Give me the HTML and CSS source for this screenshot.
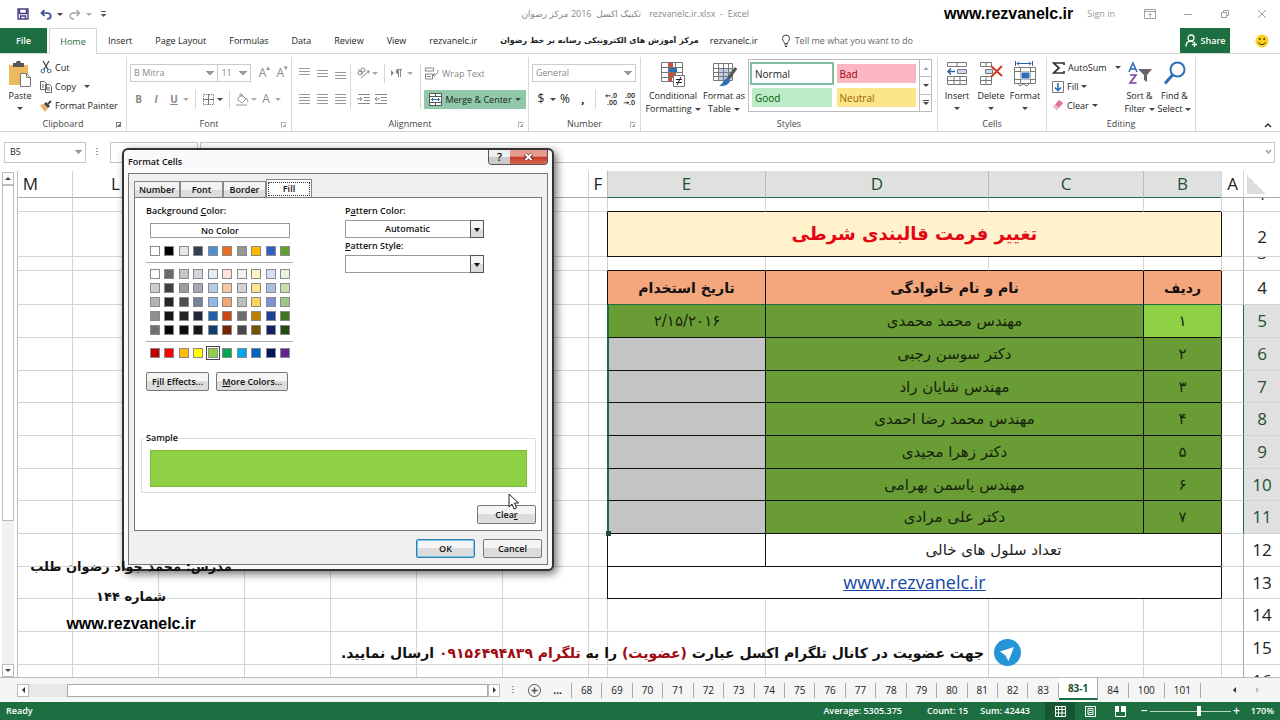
FILE: index.html
```html
<!DOCTYPE html>
<html lang="en">
<head>
    <meta charset="UTF-8">
    <meta name="viewport" content="width=device-width, initial-scale=1.0">
    <title>rezvanelc.ir.xlsx - Excel</title>
    <link rel="stylesheet" href="styles.css">
</head>
<body>
<div class="app">

    <header class="titlebar">
        <div class="quick">
            <button class="icon-btn" aria-label="Save"><svg width="12" height="12" viewBox="0 0 12 12" fill="none" stroke="#4b3f8c" stroke-width="1.4"><path d="M1 1h10v10H1zM2.5 1v4.500h7V1M3.500 11V8h5v3"/></svg></button>
            <button class="icon-btn" aria-label="Undo"><svg width="12" height="11" viewBox="0 0 12 11" fill="none" stroke="#2b4a8b" stroke-width="1.700"><path d="M4.500 1L1.500 4l3 3M1.500 4H7c5 0 5 6 0 6"/></svg></button>
            <i class="caret"></i>
            <button class="icon-btn redo" aria-label="Redo"><svg width="12" height="11" viewBox="0 0 12 11" fill="none" stroke="#a5a5a5" stroke-width="1.500"><path d="M7.500 1l3 3-3 3M10.500 4H5C0 4 0 10 5 10"/></svg></button>
            <i class="caret dim"></i>
            <button class="icon-btn more" aria-label="Customize toolbar"><svg width="7" height="7" viewBox="0 0 7 7"><path d="M1 .5h5" stroke="#555"/><path d="M.5 3h6L3.500 6z" fill="#555"/></svg></button>
        </div>
        <div class="doc-title"><span lang="fa" dir="rtl">تکنیک اکسل &nbsp;2016 مرکز رضوان</span><span>rezvanelc.ir.xlsx &nbsp;- &nbsp;Excel</span></div>
        <strong class="site">www.rezvanelc.ir</strong>
        <a class="signin" href="#">Sign in</a>
        <div class="window-btns">
            <button class="icon-btn" aria-label="Ribbon options"><svg width="12" height="10" viewBox="0 0 12 10" fill="none" stroke="#a0a0a0"><path d="M.5.5h11v9H.5zM.5 2.500h11M6 8.500v-4M4.500 6L6 4.500 7.500 6"/></svg></button>
            <button class="icon-btn" aria-label="Minimize"><svg width="10" height="10" viewBox="0 0 10 10" stroke="#a0a0a0"><path d="M1 5.500h8"/></svg></button>
            <button class="icon-btn" aria-label="Restore"><svg width="10" height="10" viewBox="0 0 10 10" fill="none" stroke="#a0a0a0"><path d="M1.500 3.500h5v5h-5zM3.500 3.500v-2h5v5h-2"/></svg></button>
            <button class="icon-btn" aria-label="Close"><svg width="10" height="10" viewBox="0 0 10 10" stroke="#a0a0a0"><path d="M1 1l8 8M9 1L1 9"/></svg></button>
        </div>
    </header>

    <nav class="tabs">
        <button class="tab file">File</button>
        <button class="tab active">Home</button>
        <button class="tab">Insert</button>
        <button class="tab">Page Layout</button>
        <button class="tab">Formulas</button>
        <button class="tab">Data</button>
        <button class="tab">Review</button>
        <button class="tab">View</button>
        <button class="tab">rezvanelc.ir</button>
        <button class="tab fa" lang="fa" dir="rtl">مرکز آموزش های الکترونیکی رسانه بر خط رضوان</button>
        <button class="tab">rezvanelc.ir</button>
        <button class="tab tell"><svg width="10" height="13" viewBox="0 0 10 13" fill="none" stroke="#444"><path d="M3.500 9.500C3.500 7.500 1.500 7 1.500 4.500a3.500 3.500 0 0 1 7 0C8.500 7 6.500 7.500 6.500 9.500zM3.500 11h3M4 12.500h2"/></svg>Tell me what you want to do</button>
        <button class="share"><svg width="13" height="13" viewBox="0 0 13 13" fill="none" stroke="#fff" stroke-width="1.300"><circle cx="6" cy="4" r="3"/><path d="M1 12.500c0-3 2-5 4-5.300 2 0 3 .5 3.500 1M9.500 8v5M7 10.500h5"/></svg>Share</button>
        <svg class="smiley" width="14" height="14" viewBox="0 0 14 14"><circle cx="7" cy="7" r="6.500" fill="#fbd021"/><circle cx="4.800" cy="5" r="1" fill="#423100"/><circle cx="9.200" cy="5" r="1" fill="#423100"/><path d="M3.500 8.300c1.500 3 5.500 3 7 0" fill="none" stroke="#423100"/></svg>
    </nav>

    <section class="ribbon">
        <div class="group g-clipboard">
            <div class="group-body">
                <button class="big"><svg width="26" height="28" viewBox="0 0 26 28"><path d="M2 5h19v20H2z" fill="#edb95e"/><path d="M6 3h3c0-3 5-3 5 0h3v4H6z" fill="#555"/><path d="M13.500 13.500h6l4 4v9h-10z" fill="#fff" stroke="#777"/><path d="M19.500 13.500v4h4" fill="none" stroke="#777"/></svg><span>Paste</span><i class="caret"></i></button>
                <div class="stack">
                    <button class="small"><svg width="12" height="13" viewBox="0 0 12 13" fill="none" stroke="#444"><path d="M3 0l5 8.500M9 0L4 8.500" stroke-width="1.300"/><circle cx="2.800" cy="10" r="1.800" stroke="#2f6ea8"/><circle cx="9.200" cy="10" r="1.800" stroke="#2f6ea8"/></svg>Cut</button>
                    <button class="small"><svg width="12" height="12" viewBox="0 0 12 12" fill="#fff" stroke="#666"><path d="M.5.5h4l2 2v6h-6zM5.500 3.500h4l2 2v6h-6zM7 7h3M7 9h3M2 4h2M2 6h2"/></svg>Copy<i class="caret wide"></i></button>
                    <button class="small"><svg width="12" height="12" viewBox="0 0 12 12"><path d="M0 5l4-1 4 4-3 4z" fill="#e9b065"/><path d="M4 4l2-2 4 4-2 2z" fill="#444"/><path d="M8 4l3-3" stroke="#444" stroke-width="2"/></svg>Format Painter</button>
                </div>
            </div>
            <div class="group-label">Clipboard<i class="launch"></i></div>
        </div>

        <div class="group g-font dim">
            <div class="group-body column">
                <div class="line">
                    <select class="combo font-name" aria-label="Font"><option>B Mitra</option></select><select class="combo font-size" aria-label="Font size"><option>11</option></select>
                    <button class="cmd w18 letter">A<sup>▴</sup></button>
                    <button class="cmd w18 letter">A<sup>▾</sup></button>
                </div>
                <div class="line">
                    <button class="cmd"><b>B</b></button>
                    <button class="cmd w18"><b><em>I</em></b></button>
                    <button class="cmd w18"><b><u>U</u></b></button>
                    <i class="caret dim"></i><i class="bar"></i>
                    <button class="cmd w18" aria-label="Borders"><svg width="11" height="11" viewBox="0 0 11 11" fill="none" stroke="#777"><path d="M.5.5h10v10H.5z" stroke-dasharray="1.500 1"/><path d="M5.500 0v11M0 5.500h11"/></svg></button>
                    <i class="caret"></i><i class="bar"></i>
                    <button class="cmd w18" aria-label="Fill color"><svg width="14" height="13" viewBox="0 0 14 13" fill="none" stroke="#999"><path d="M3 5l4-3 4 4-4 4-4-3zM5 4V1h2v3M11 5c2 1 2 3 1.500 4"/><path d="M1 12h11" stroke="#ccc" stroke-width="2"/></svg></button>
                    <i class="caret dim"></i>
                    <button class="cmd w18 letter" aria-label="Font color">A</button>
                    <i class="caret dim"></i>
                </div>
            </div>
            <div class="group-label">Font<i class="launch"></i></div>
        </div>

        <div class="group g-align dim">
            <div class="group-body align-body">
                <div class="align-grid">
                    <button class="cmd" aria-label="Top align"><i class="lines l2 top"></i></button>
                    <button class="cmd" aria-label="Middle align"><i class="lines l2"></i></button>
                    <button class="cmd" aria-label="Bottom align"><i class="lines l2 bottom"></i></button>
                    <button class="cmd" aria-label="Align left"><i class="lines"></i></button>
                    <button class="cmd" aria-label="Center"><i class="lines"></i></button>
                    <button class="cmd" aria-label="Align right"><i class="lines"></i></button>
                </div>
                <div class="align-mid">
                    <div class="line">
                        <button class="cmd" aria-label="Orientation"><svg width="14" height="12" viewBox="0 0 14 12" fill="none" stroke="#888"><circle cx="3" cy="6" r="2"/><circle cx="6" cy="3" r="2"/><path d="M1 2l5 5M4 11l8-7M9.500 4H12v2.500"/></svg></button>
                        <i class="caret dim"></i><i class="bar"></i>
                        <button class="cmd" aria-label="Text direction"><svg width="11" height="9" viewBox="0 0 11 9" fill="#888"><path d="M0 1l3 3-3 3zM7 0h4v1h-1v7H9V1H8v7H7V5C4 5 4 0 7 0z"/></svg></button>
                        <i class="caret dim"></i>
                    </div>
                    <div class="line">
                        <button class="cmd" aria-label="Decrease indent"><svg width="14" height="11" viewBox="0 0 14 11" fill="none" stroke="#888"><path d="M1 .5h12M7 3.500h6M7 6.500h6M1 9.500h12M0 5h5M3 3l2 2-2 2"/></svg></button>
                        <button class="cmd" aria-label="Increase indent"><svg width="14" height="11" viewBox="0 0 14 11" fill="none" stroke="#888"><path d="M1 .5h12M7 3.500h6M7 6.500h6M1 9.500h12M1 5h5M3 3L1 5l2 2"/></svg></button>
                    </div>
                </div>
                <div class="align-right">
                    <button class="small wrap"><svg width="14" height="13" viewBox="0 0 14 13" fill="none" stroke="#888"><path d="M.5 1h8v3h-8zM.5 7h7v5h-7zM2 9.500h4M13 3c0 4-2 5-5 5M10 6L8 8l2 2"/></svg>Wrap Text</button>
                    <button class="small merge"><svg width="13" height="13" viewBox="0 0 13 13" fill="#fff" stroke="#555"><path d="M.5.5h12v12H.5zM.5 3.500h12M.5 9.500h12M6.500.5v3M6.500 9.500v3"/><path d="M2.500 6.500h8M4 5L2.500 6.500 4 8M9 5l1.500 1.500L9 8" fill="none" stroke="#2b6cb0"/></svg>Merge &amp; Center<i class="caret"></i></button>
                </div>
            </div>
            <div class="group-label">Alignment<i class="launch"></i></div>
        </div>

        <div class="group g-number">
            <div class="group-body column">
                <div class="line"><select class="combo number-format" aria-label="Number format"><option>General</option></select></div>
                <div class="line">
                    <button class="cmd w18 sign">$</button><i class="caret"></i>
                    <button class="cmd w18 sign">%</button>
                    <button class="cmd w18 sign"><b>,</b></button><i class="bar"></i>
                    <button class="cmd w18 dec" aria-label="Increase decimal"><span>←.0</span><span>.00</span></button>
                    <button class="cmd w18 dec" aria-label="Decrease decimal"><span>.00</span><span>→.0</span></button>
                </div>
            </div>
            <div class="group-label">Number<i class="launch"></i></div>
        </div>

        <div class="group g-styles">
            <div class="group-body">
                <button class="big w56"><svg width="26" height="28" viewBox="0 0 26 28" fill="none" stroke="#777"><path d="M1.500 2.500h21v19h-21zM1.500 7.500h21M1.500 12.500h21M1.500 17.500h21M8.500 2v19M15.500 2v19"/><path d="M9 3h4v4H9zM9 13h6v4H9zM9 18h3v3H9z" fill="#d8492c" stroke="none"/><path d="M9 8h8v4H9z" fill="#2d6fb7" stroke="none"/><path d="M13.500 15.500h11v11h-11z" fill="#fff"/><path d="M16 19.500h6M16 22.500h6M21 17l-4 8" stroke="#222"/></svg><span>Conditional</span><span>Formatting<i class="caret"></i></span></button>
                <button class="big w44"><svg width="26" height="28" viewBox="0 0 26 28" fill="none" stroke="#777"><path d="M8 8h13v13H8z" fill="#bcd3ea" stroke="none"/><path d="M2.500 3.500h19v17h-19zM2.500 8.500h19M2.500 12.500h19M2.500 16.500h19M7.500 3v17M12.500 3v17M17.500 3v17"/><path d="M25 8l-8 11" stroke="#555" stroke-width="3"/><path d="M16 18l3 3c-2 5-7 5-11 5 4-2 4-6 8-8z" fill="#2d6fb7" stroke="none"/></svg><span>Format as</span><span>Table<i class="caret"></i></span></button>
                <div class="gallery">
                    <div class="gallery-items">
                        <button class="style normal">Normal</button>
                        <button class="style bad">Bad</button>
                        <button class="style good">Good</button>
                        <button class="style neutral">Neutral</button>
                    </div>
                    <div class="gallery-scroll">
                        <button aria-label="Up"><i class="caret up dim"></i></button>
                        <button aria-label="Down"><i class="caret"></i></button>
                        <button class="all" aria-label="More"><i class="caret"></i></button>
                    </div>
                </div>
            </div>
            <div class="group-label">Styles</div>
        </div>

        <div class="group g-cells">
            <div class="group-body">
                <button class="big"><svg width="24" height="28" viewBox="0 0 24 28" fill="none" stroke="#777"><path d="M2.500 2.500h19v4h-19zM12 2v4M2.500 16.500h19v8h-19zM2.500 20.500h19M9 16v8M15 16v8"/><path d="M12.500 9.500h9v4h-9z" fill="#c6d9ef"/><path d="M3 11.500h7M6 8.500l-3 3 3 3" stroke="#2d5fa8" stroke-width="1.500"/></svg><span>Insert</span><i class="caret"></i></button>
                <button class="big"><svg width="24" height="28" viewBox="0 0 24 28" fill="none" stroke="#777"><path d="M1.500 2.500h11v4h-11zM7 2v4M1.500 16.500h11v8h-11zM1.500 20.500h11M7 16v8"/><path d="M6.500 9.500h7v4h-7z" fill="#c6d9ef"/><path d="M12 6l11 10M23 6L12 17" stroke="#d03a1e" stroke-width="2"/></svg><span>Delete</span><i class="caret"></i></button>
                <button class="big"><svg width="24" height="28" viewBox="0 0 24 28" fill="none" stroke="#777"><path d="M1.500 7.500h21v16h-21zM1.500 11.500h21M1.500 19.500h21M7.500 7v16M17.500 7v16M4 23l3 3 3-2 4 2 3-3"/><path d="M8 12h9v7H8z" fill="#2d6fb7" stroke="#fff"/><path d="M2.500 1v5M19.500 1v5M4 3.500h14M6 1.500l-2 2 2 2M16 1.500l2 2-2 2" stroke="#2d5fa8"/></svg><span>Format</span><i class="caret"></i></button>
            </div>
            <div class="group-label">Cells</div>
        </div>

        <div class="group g-editing">
            <div class="group-body">
                <div class="stack">
                    <button class="small"><svg width="13" height="12" viewBox="0 0 13 12" fill="none" stroke="#333" stroke-width="1.700"><path d="M12 3V1H1.500L7 6l-5.500 5H12V9"/></svg>AutoSum<i class="caret wide"></i></button>
                    <button class="small"><svg width="12" height="12" viewBox="0 0 12 12" fill="none" stroke="#777"><path d="M.5.5h11v11H.5z"/><path d="M6 2v7M3 6.500l3 3 3-3" stroke="#2d6fb7" stroke-width="1.600"/></svg>Fill<i class="caret"></i></button>
                    <button class="small"><svg width="12" height="11" viewBox="0 0 12 11"><path d="M7 0l4 3-6 7-4-3z" fill="#e0708f"/><path d="M1 7l2-2.500 4 3L5 10z" fill="#f3bccb"/></svg>Clear<i class="caret"></i></button>
                </div>
                <button class="big w34"><svg width="26" height="28" viewBox="0 0 26 28" fill="none" stroke-width="1.600"><path d="M2 12L6 3l4 9M3.500 9h5" stroke="#2d6fb7"/><path d="M3 15h6l-6 8h6.500" stroke="#7a3fa0"/><path d="M11 9h14l-5 6v7l-3-2v-5z" fill="#666"/></svg><span>Sort &amp;</span><span>Filter<i class="caret"></i></span></button>
                <button class="big w34"><svg width="24" height="28" viewBox="0 0 24 28" fill="none" stroke="#2d6fb7" stroke-width="2"><circle cx="14.500" cy="9.500" r="7"/><path d="M9.500 15L2 23.500" stroke-width="3"/></svg><span>Find &amp;</span><span>Select<i class="caret"></i></span></button>
            </div>
            <div class="group-label">Editing</div>
        </div>
        <button class="collapse" aria-label="Collapse the ribbon"><svg width="8" height="6" viewBox="0 0 8 6" fill="none" stroke="#333" stroke-width="1.500"><path d="M1 5l3-3 3 3"/></svg></button>
    </section>

    <div class="formula">
        <select class="combo name-box" aria-label="Name box"><option>B5</option></select>
        <span class="dots"></span>
        <div class="fx"></div>
        <input class="formula-input" type="text" aria-label="Formula bar">
        <svg class="expand" width="7" height="5" viewBox="0 0 7 5" fill="none" stroke="#999" stroke-width="1.300"><path d="M1 1l2.500 3L6 1"/></svg>
    </div>

    <main class="workspace">
        <div class="vscroll">
            <button aria-label="Scroll up"><i class="caret up"></i></button>
            <span class="vthumb"></span>
            <span class="vtrack"></span>
            <button aria-label="Scroll down"><i class="caret"></i></button>
        </div>
        <div class="sheet" lang="fa" dir="rtl">
            <table class="grid">
                <colgroup>
                    <col class="c-head"><col class="c-a"><col class="c-b"><col class="c-c"><col class="c-d"><col class="c-e"><col class="c-f">
                    <col class="c-n"><col class="c-n"><col class="c-n"><col class="c-n"><col class="c-n"><col class="c-n"><col>
                </colgroup>
                <thead>
                    <tr><th class="corner"></th><th>A</th><th class="sel">B</th><th class="sel">C</th><th class="sel">D</th><th class="sel">E</th><th>F</th><th>G</th><th>H</th><th>I</th><th>J</th><th>K</th><th>L</th><th>M</th></tr>
                </thead>
                <tbody>
                    <tr class="slim box-below"><th><div class="cut">1</div></th><td></td><td></td><td></td><td></td><td></td><td></td><td></td><td></td><td></td><td></td><td></td><td></td><td></td></tr>
                    <tr class="title"><th>2</th><td class="edge"></td><td class="ink" colspan="4">تغییر فرمت قالبندی شرطی</td><td></td><td></td><td></td><td></td><td></td><td></td><td></td><td></td></tr>
                    <tr class="slim box-below"><th><div class="cut">3</div></th><td></td><td></td><td></td><td></td><td></td><td></td><td></td><td></td><td></td><td></td><td></td><td></td><td></td></tr>
                    <tr class="heads"><th>4</th><td class="edge"></td><td class="ink">ردیف</td><td class="ink" colspan="2">نام و نام خانوادگی</td><td class="ink">تاریخ استخدام</td><td></td><td></td><td></td><td></td><td></td><td></td><td></td><td></td></tr>
                    <tr class="data"><th>5</th><td class="edge"></td><td class="ink current">۱</td><td class="ink" colspan="2">مهندس محمد محمدی</td><td class="ink last">۲/۱۵/۲۰۱۶</td><td></td><td></td><td></td><td></td><td></td><td></td><td></td><td></td></tr>
                    <tr class="data"><th>6</th><td class="edge"></td><td class="ink">۲</td><td class="ink" colspan="2">دکتر سوسن رجبی</td><td class="ink last blank"></td><td></td><td></td><td></td><td></td><td></td><td></td><td></td><td></td></tr>
                    <tr class="data"><th>7</th><td class="edge"></td><td class="ink">۳</td><td class="ink" colspan="2">مهندس شایان راد</td><td class="ink last blank"></td><td></td><td></td><td></td><td></td><td></td><td></td><td></td><td></td></tr>
                    <tr class="data"><th>8</th><td class="edge"></td><td class="ink">۴</td><td class="ink" colspan="2">مهندس محمد رضا احمدی</td><td class="ink last blank"></td><td></td><td></td><td></td><td></td><td></td><td></td><td></td><td></td></tr>
                    <tr class="data"><th>9</th><td class="edge"></td><td class="ink">۵</td><td class="ink" colspan="2">دکتر زهرا مجیدی</td><td class="ink last blank"></td><td></td><td></td><td></td><td></td><td></td><td></td><td></td><td></td></tr>
                    <tr class="data"><th>10</th><td class="edge"></td><td class="ink">۶</td><td class="ink" colspan="2">مهندس یاسمن بهرامی</td><td class="ink last blank"></td><td></td><td></td><td></td><td></td><td></td><td></td><td></td><td></td></tr>
                    <tr class="data"><th>11</th><td class="edge"></td><td class="ink">۷</td><td class="ink" colspan="2">دکتر علی مرادی</td><td class="ink last blank"><i class="handle"></i></td><td></td><td></td><td></td><td></td><td></td><td></td><td></td><td></td></tr>
                    <tr><th>12</th><td class="edge"></td><td class="ink" colspan="3">تعداد سلول های خالی</td><td class="ink"></td><td></td><td></td><td></td><td></td><td></td><td></td><td></td><td></td></tr>
                    <tr><th>13</th><td class="edge"></td><td class="ink" colspan="4"><a href="#">www.rezvanelc.ir</a></td><td></td><td></td><td></td><td></td><td></td><td></td><td></td><td></td></tr>
                    <tr><th>14</th><td></td><td></td><td></td><td></td><td></td><td></td><td></td><td></td><td></td><td></td><td></td><td></td><td></td></tr>
                    <tr><th>15</th><td></td><td></td><td></td><td></td><td></td><td></td><td></td><td></td><td></td><td></td><td></td><td></td><td></td></tr>
                    <tr><th>16</th><td></td><td></td><td></td><td></td><td></td><td></td><td></td><td></td><td></td><td></td><td></td><td></td><td></td></tr>
                </tbody>
            </table>
        </div>
        <div class="telegram" lang="fa" dir="rtl">
            <svg width="27" height="27" viewBox="0 0 27 27"><circle cx="13.500" cy="13.500" r="13.500" fill="#2496d8"/><path d="M6 12.500L20 8l-5.500 14-3-5.500z" fill="#fff"/></svg>
            <p>جهت عضویت در کانال تلگرام اکسل عبارت <em>(عضویت)</em> را به <em>تلگرام <b>۰۹۱۵۶۴۹۴۸۳۹</b></em> ارسال نمایید.</p>
        </div>
    </main>

    <footer class="sheet-bar">
        <div class="hscroll">
            <button aria-label="Scroll left"><i class="caret left"></i></button>
            <span class="htrack"></span>
            <span class="hthumb"></span>
            <button aria-label="Scroll right"><i class="caret right"></i></button>
        </div>
        <span class="dots"></span>
        <button class="add" aria-label="New sheet"><svg width="13" height="13" viewBox="0 0 13 13" fill="none" stroke="#555"><circle cx="6.500" cy="6.500" r="6"/><path d="M6.500 3.500v6M3.500 6.500h6" stroke-width="1.500"/></svg></button>
        <span class="ellipsis">...</span>
        <div class="sheet-tabs" id="sheet-tabs"></div>
        <div class="tab-nav">
            <button aria-label="Previous sheets"><i class="caret left"></i></button>
            <button aria-label="Next sheets"><i class="caret right dim"></i></button>
        </div>
    </footer>

    <div class="status">
        <span class="ready">Ready</span>
        <span>Average: 5305.375</span>
        <span class="count">Count: 15</span>
        <span>Sum: 42443</span>
        <div class="views">
            <button class="on" aria-label="Normal view"><svg width="11" height="11" viewBox="0 0 11 11" fill="none" stroke="#fff"><path d="M.5.5h10v10H.5zM.5 3.500h10M.5 7h10M3.500.5v10M7 .5v10"/></svg></button>
            <button aria-label="Page layout"><svg width="11" height="11" viewBox="0 0 11 11" fill="none" stroke="#fff"><path d="M.5.5h10v10H.5zM3 2.500h5v6H3zM4 4.500h3M4 6.500h3"/></svg></button>
            <button aria-label="Page break preview"><svg width="11" height="11" viewBox="0 0 11 11" fill="#fff"><path d="M0 0h4v6H0zM6 0h4v6H6z"/><path d="M.5 0v10.500h10V0" fill="none" stroke="#fff"/></svg></button>
        </div>
        <div class="zoom">
            <button aria-label="Zoom out">−</button>
            <input type="range" min="10" max="270" value="170" aria-label="Zoom">
            <button aria-label="Zoom in">+</button>
        </div>
        <span class="percent">170%</span>
    </div>

    <div class="dialog" role="dialog" aria-labelledby="dialog-title">
        <div class="dialog-head">
            <span id="dialog-title">Format Cells</span>
            <div class="dialog-btns">
                <button class="help" aria-label="Help">?</button><button class="close" aria-label="Close"><svg width="9" height="8" viewBox="0 0 9 8"><path d="M1 1l7 6M8 1L1 7" stroke="#6b2a22" stroke-width="3.500"/><path d="M1.500 1l6 6M7.500 1l-6 6" stroke="#fff" stroke-width="2"/></svg></button>
            </div>
        </div>
        <div class="dialog-body">
            <div class="dialog-tabs">
                <button>Number</button><button>Font</button><button>Border</button><button class="active"><span>Fill</span></button>
            </div>
            <div class="page">
                <div class="page-cols">
                    <div class="colors">
                        <div class="caption">Background <u>C</u>olor:</div>
                        <button class="no-color">No Color</button>
                        <div class="swatches" data-set="theme"></div>
                        <hr>
                        <div class="swatches" data-set="shades"></div>
                        <hr>
                        <div class="swatches" data-set="standard"></div>
                        <div class="color-btns"><button class="btn">F<u>i</u>ll Effects...</button><button class="btn"><u>M</u>ore Colors...</button></div>
                    </div>
                    <div class="pattern">
                        <label for="pattern-color">P<u>a</u>ttern Color:</label>
                        <div class="drop"><select id="pattern-color"><option>Automatic</option></select><i class="drop-arrow"></i></div>
                        <label for="pattern-style"><u>P</u>attern Style:</label>
                        <div class="drop"><select id="pattern-style"><option></option></select><i class="drop-arrow"></i></div>
                    </div>
                </div>
                <fieldset class="sample"><legend>Sample</legend><div class="sample-fill"></div></fieldset>
                <div class="page-foot"><button class="btn">Clea<u>r</u></button></div>
            </div>
            <div class="dialog-foot"><button class="btn ok">OK</button><button class="btn">Cancel</button></div>
        </div>
        <svg class="pointer" width="12" height="18" viewBox="0 0 12 18"><path d="M1 1v13l3-3 2 5 2.500-1-2-5h4z" fill="#fff" stroke="#222"/></svg>
    </div>

    <div class="credit" lang="fa" dir="rtl">
        <div>مدرس: محمد جواد رضوان طلب</div>
        <div>شماره ۱۴۴</div>
        <strong>www.rezvanelc.ir</strong>
    </div>
</div>

<script>
    const colors = {
        theme: ['#ffffff', '#000000', '#e7e6e6', '#333f50', '#4a8fd0', '#ee6c1f', '#969696', '#ffb900', '#2f5fc4', '#62a032'],
        shades: [
            '#ffffff', '#6b6b6b', '#c4c4c4', '#d3d7e0', '#e2edf5', '#fde3d8', '#f1f1f1', '#fff1c4', '#d8dcf5', '#e6f1df',
            '#cfcfcf', '#404040', '#9c9c9c', '#a4a9b8', '#b5cdeb', '#f9c6a4', '#d3d3d3', '#fde58c', '#acbfe6', '#bfe0ae',
            '#b3b3b3', '#262626', '#505050', '#7482a0', '#8fb9ea', '#f3a878', '#bebebe', '#fbd558', '#7d90d8', '#9ac985',
            '#909090', '#151515', '#222222', '#222538', '#1c60b0', '#c9480f', '#6c6c6c', '#bb8100', '#1d429c', '#40751f',
            '#717171', '#080808', '#0c0c0c', '#15171d', '#123f70', '#762402', '#474747', '#745300', '#122160', '#214b10'
        ],
        standard: ['#c00000', '#ff0000', '#ffb90a', '#ffff00', '#8fd045', '#00a650', '#00a5ef', '#0260c2', '#001560', '#662299']
    };

    document.querySelectorAll('.swatches').forEach(box => {
        colors[box.dataset.set].forEach(color => {
            const picked = color === '#8fd045' ? ' picked' : '';
            box.innerHTML += `<button class="swatch${picked}" style="background:${color}" aria-label="${color}"></button>`;
        });
    });

    const tabs = document.getElementById('sheet-tabs');
    const names = [];
    for (let i = 68; i <= 83; i++) names.push(String(i));
    names.push('83-1', '84', '100', '101');
    names.forEach(name => {
        tabs.innerHTML += `<button class="${name === '83-1' ? 'current' : ''}">${name}</button>`;
    });
</script>
</body>
</html>
```

FILE: styles.css
```css
* {
    box-sizing: border-box;
}
body {
    margin: 0;
    font-family: "Open Sans", "DejaVu Sans", sans-serif;
    font-size: 9px;
    line-height: 12px;
    color: #222;
    background: #fff;
}
button, select, input {
    font: inherit;
    color: inherit;
    margin: 0;
    padding: 0;
    border: none;
    background: none;
    border-radius: 0;
}
button {
    display: flex;
    align-items: center;
    justify-content: center;
    white-space: nowrap;
}
svg {
    flex: none;
    display: block;
}
.app {
    position: relative;
    display: flex;
    flex-direction: column;
    height: 100vh;
    overflow: hidden;
}
.caret {
    flex: none;
    border: 3px solid transparent;
    border-top-color: #444;
    border-bottom: 0;
    width: 0;
    height: 0;
}
.caret.dim {
    border-top-color: #aaa;
}
.caret.up {
    border-top: 0;
    border-bottom: 3px solid #444;
}
.caret.up.dim {
    border-bottom-color: #aaa;
}
.caret.left {
    border: 3px solid transparent;
    border-left: 0;
    border-right-color: #333;
}
.caret.right {
    border: 3px solid transparent;
    border-right: 0;
    border-left-color: #333;
}
.caret.right.dim {
    border-left-color: #bbb;
}
.bar {
    width: 1px;
    height: 19px;
    background: #d8d8d8;
}

/* title bar */
.titlebar {
    flex: none;
    height: 28px;
    display: flex;
    align-items: center;
    color: #888;
}
.quick {
    display: flex;
    align-items: center;
    gap: 5px;
    padding-left: 17px;
}
.quick .redo {
    margin-left: 1px;
}
.quick .more {
    margin-left: 3px;
}
.quick .icon-btn + .icon-btn {
    margin-left: 6px;
}
.doc-title {
    flex: 1;
    display: flex;
    justify-content: flex-end;
    gap: 8px;
}
.site {
    margin: 0 14px 0 195px;
    font: bold 16px/20px "Liberation Sans", sans-serif;
    color: #000;
}
.signin {
    color: #999;
    text-decoration: none;
}
.window-btns {
    display: flex;
    gap: 27px;
    padding: 0 13px 0 29px;
}

/* ribbon tabs */
.tabs {
    flex: none;
    height: 26px;
    display: flex;
    align-items: stretch;
    border-bottom: 1px solid #d5d5d5;
}
.tab {
    padding: 0 12px 0 11px;
}
.tab.file {
    width: 47px;
    padding: 0;
    margin-right: 2px;
    background: #1d6f42;
    color: #fff;
    font-weight: 600;
}
.tab.active {
    width: 48px;
    padding: 0;
    margin-bottom: -1px;
    border: 1px solid #d5d5d5;
    border-bottom: none;
    background: #fff;
    color: #1d6f42;
}
.tab.fa {
    padding-right: 0;
    font: bold 8px/12px "DejaVu Sans", sans-serif;
}
.tab.tell {
    gap: 4px;
    color: #666;
}
.share {
    width: 50px;
    margin-left: auto;
    gap: 3px;
    background: #1d6f42;
    color: #fff;
    font-weight: 600;
}
.smiley {
    align-self: center;
    margin: 0 11px 0 25px;
}

/* ribbon */
.ribbon {
    flex: none;
    height: 78px;
    display: flex;
    border-bottom: 1px solid #d5d5d5;
}
.group {
    flex: none;
    display: flex;
    flex-direction: column;
    margin-top: 3px;
    border-right: 1px solid #d8d8d8;
}
.group.dim {
    color: #8a8a8a;
}
.group-body {
    flex: 1;
    display: flex;
}
.group-body.column {
    flex-direction: column;
    gap: 8px;
    padding: 7px 0 0 3px;
}
.group-label {
    position: relative;
    height: 13px;
    text-align: center;
    color: #444;
}
.launch {
    position: absolute;
    right: 4px;
    top: 4px;
    width: 6px;
    height: 6px;
    border: 1px solid #777;
    border-right-color: transparent;
    border-bottom-color: transparent;
    background: linear-gradient(135deg, transparent 50%, #777 50%) bottom right / 4px 4px no-repeat;
}
.dim .launch, .g-number .launch {
    opacity: 0.6;
}
.g-clipboard {
    width: 127px;
}
.g-font {
    width: 165px;
}
.g-align {
    width: 237px;
}
.g-number {
    width: 112px;
}
.g-styles {
    width: 297px;
}
.g-cells {
    width: 109px;
}
.g-editing {
    width: 149px;
}
.big {
    width: 34px;
    flex-direction: column;
    justify-content: flex-start;
    line-height: 13px;
}
.big svg {
    margin: 3px 0 1px;
}
.big > .caret {
    margin-top: 5px;
}
.big span .caret {
    display: inline-block;
    margin-left: 3px;
    vertical-align: middle;
}
.big.w56 {
    width: 56px;
}
.big.w44 {
    width: 46px;
}
.big.w34 {
    width: 35px;
}
.g-clipboard .group-body {
    padding-left: 3px;
}
.g-cells .group-body {
    padding-left: 2px;
}
.stack {
    display: flex;
    flex-direction: column;
    align-items: flex-start;
    padding: 1px 0 0 3px;
}
.small {
    height: 19px;
    gap: 3px;
}
.small .wide {
    margin-left: 5px;
}
.g-editing .stack {
    width: 75px;
    padding-left: 5px;
}
.line {
    display: flex;
    align-items: center;
    height: 18px;
}
.combo {
    appearance: none;
    height: 18px;
    padding: 0 3px;
    border: 1px solid #ccc;
    background: linear-gradient(45deg, transparent 50%, #999 50%) right 7px center / 4px 4px no-repeat,
        linear-gradient(-45deg, transparent 50%, #999 50%) right 3px center / 4px 4px no-repeat;
}
.font-name {
    width: 89px;
}
.font-size {
    width: 34px;
    margin-left: -1px;
    margin-right: 4px;
}
.cmd {
    width: 17px;
    height: 18px;
    font-size: 10px;
}
.cmd.w18 {
    width: 18px;
}
.cmd.letter {
    font-size: 12px;
}
.cmd sup {
    font-size: 7px;
    line-height: 7px;
    align-self: flex-start;
}
.g-font .bar {
    margin: 0 3px 0 6px;
}
.align-body {
    padding: 7px 0 0 4px;
}
.align-grid {
    display: grid;
    grid-template-columns: repeat(3, 18px);
    grid-auto-rows: 18px;
    row-gap: 8px;
    height: 45px;
}
.lines {
    width: 11px;
    height: 10px;
    background: repeating-linear-gradient(#999 0 1px, transparent 1px 3px);
}
.lines.l2 {
    height: 7px;
}
.lines.top {
    margin-bottom: 4px;
}
.lines.bottom {
    margin-top: 4px;
}
.align-mid {
    display: flex;
    flex-direction: column;
    gap: 8px;
    width: 71px;
    height: 45px;
    padding-left: 4px;
    border-left: 1px solid #d8d8d8;
    border-right: 1px solid #d8d8d8;
}
.align-mid .bar {
    margin: 0 3px 0 6px;
}
.align-mid .line:first-child .caret:last-child {
    margin-left: 2px;
}
.align-right {
    display: flex;
    flex-direction: column;
    align-items: flex-start;
    gap: 7px;
    padding-left: 3px;
}
.small.wrap {
    padding-left: 1px;
    color: #888;
}
.small.merge {
    width: 102px;
    gap: 3px;
    background: #8fc9a9;
    color: #222;
}
.number-format {
    width: 104px;
    color: #888;
}
.cmd.sign {
    font-size: 12px;
}
.g-number .bar {
    margin: 0 3px;
}
.cmd.dec {
    flex-direction: column;
    align-items: flex-end;
    font-size: 7px;
    line-height: 7px;
    font-weight: 600;
}
.g-styles .group-body {
    padding-left: 4px;
}
.gallery {
    display: flex;
    width: 184px;
    height: 53px;
    margin-top: 2px;
    margin-left: 1px;
    border: 1px solid #bbb;
}
.gallery-items {
    flex: 1;
    display: grid;
    grid-template-columns: 1fr 1fr;
    gap: 5px;
    padding: 4px 3px;
}
.style {
    justify-content: flex-start;
    padding-left: 3px;
    font-size: 10px;
}
.style.normal {
    outline: 2px solid #7fbf9f;
}
.style.bad {
    background: #fbb8c4;
    color: #9c0006;
}
.style.good {
    background: #bdebc8;
    color: #006100;
}
.style.neutral {
    background: #fde58c;
    color: #9c6500;
}
.gallery-scroll {
    display: flex;
    flex-direction: column;
    width: 12px;
}
.gallery-scroll button {
    flex: 1;
    border-left: 1px solid #bbb;
    border-bottom: 1px solid #bbb;
}
.gallery-scroll .all {
    flex-direction: column;
    gap: 1px;
    border-bottom: none;
}
.gallery-scroll .all::before {
    content: "";
    width: 6px;
    height: 1px;
    background: #444;
}
.collapse {
    align-self: flex-end;
    margin: 0 8px 3px auto;
}

/* formula bar */
.formula {
    position: relative;
    flex: none;
    height: 39px;
    display: flex;
    align-items: center;
    padding: 1px 5px 0 4px;
}
.formula .combo, .fx, .formula-input {
    height: 21px;
    border: 1px solid #c6c6c6;
}
.name-box {
    width: 82px;
    padding-left: 5px;
}
.dots {
    width: 2px;
    height: 9px;
    margin: 0 12px 0 10px;
    background: repeating-linear-gradient(#999 0 1px, transparent 1px 3px);
}
.fx {
    width: 88px;
}
.formula-input {
    flex: 1;
    margin-left: 2px;
    padding: 0 16px 0 6px;
}
.expand {
    position: absolute;
    right: 8px;
    top: 17px;
}

/* worksheet */
.workspace {
    position: relative;
    flex: 1;
    min-height: 0;
    display: flex;
    border-bottom: 1px solid #bbb;
}
.vscroll {
    flex: none;
    width: 18px;
    display: flex;
    flex-direction: column;
    padding: 1px 3px 0 2px;
    border-right: 1px solid #bbb;
}
.vscroll button {
    flex: none;
    height: 13px;
    border: 1px solid #bbb;
}
.vthumb {
    flex: 7;
    border: 1px solid #bbb;
}
.vtrack {
    flex: 3;
    background: #f0f0f0;
}
.sheet {
    flex: 1;
    min-width: 0;
    overflow: hidden;
}
/* the last column runs out under the left edge */
.grid {
    width: calc(100% + 30px);
    table-layout: fixed;
    border-collapse: separate;
    border-spacing: 0;
    font: 15px/20px "DejaVu Sans", sans-serif;
    color: #222;
}
.c-head {
    width: 37px;
}
.c-a {
    width: 22px;
}
.c-b {
    width: 78px;
}
.c-c {
    width: 155px;
}
.c-d {
    width: 223px;
}
.c-e {
    width: 158px;
}
.c-f {
    width: 19px;
}
.c-n {
    width: 86px;
}
.grid th, .grid td {
    padding: 0;
    border-left: 1px solid #d4d4d4;
    border-bottom: 1px solid #d4d4d4;
    text-align: center;
}
.grid th {
    font: 17px/20px "Open Sans", sans-serif;
}
.grid thead tr {
    height: 27px;
}
.grid thead th {
    border-bottom-color: #aaa;
}
.grid thead .sel {
    background: #e0e0e0;
    border-bottom-color: #1d6f42;
    border-left-color: #bbb;
    color: #1d5034;
}
.grid tbody tr {
    height: 33px;
}
tbody tr:nth-child(3n+1) {
    height: 32px;
}
.grid tbody th {
    border-left-color: #aaa;
}
.grid .corner {
    background: linear-gradient(45deg, #ddd 50%, transparent 50%) left 3px center / 19px 19px no-repeat;
}
.grid tbody .slim {
    height: 14px;
}
.slim th {
    vertical-align: top;
}
.cut {
    display: flex;
    justify-content: center;
    align-items: flex-end;
    height: 3px;
    line-height: 14px;
    overflow: hidden;
}
.box-below td:nth-child(n+3):nth-child(-n+6) {
    border-bottom-color: #111;
}
.grid .edge, .grid .ink {
    border-left-color: #111;
}
.grid .ink {
    border-bottom-color: #111;
}
.grid .title {
    height: 45px;
}
.title .ink {
    background: #fff2cc;
    color: #e30613;
    font-size: 18px;
    font-weight: bold;
}
.grid .title th {
    padding-top: 6px;
}
.grid tbody .heads {
    height: 34px;
}
.heads .ink {
    background: #f4a77c;
    color: #111;
    font-size: 14px;
    font-weight: bold;
}
.grid .heads .ink {
    border-bottom-color: #1d6f42;
}
.data .ink {
    background: #6a9c36;
    color: #16230a;
}
.data .ink.current {
    background: #8ed145;
}
.data .ink.blank {
    background: #c4c4c4;
}
.grid .data .last {
    position: relative;
    border-left: 2px solid #1d6f42;
}
.grid .data th {
    background: #e0e0e0;
    border-left-color: #1d6f42;
    color: #1d5034;
}
.handle {
    position: absolute;
    left: -3px;
    bottom: -3px;
    width: 5px;
    height: 5px;
    background: #1d5034;
}
.grid a {
    font: 18px/20px "Open Sans", sans-serif;
    color: #1447a6;
}
.telegram {
    position: absolute;
    right: 259px;
    bottom: 11px;
    display: flex;
    align-items: center;
    gap: 10px;
    font: bold 14px/26px "DejaVu Sans", sans-serif;
    color: #111;
    white-space: nowrap;
}
.telegram p {
    margin: 0;
}
.telegram em {
    font-style: normal;
    color: #a00a12;
}

/* sheet tabs */
.sheet-bar {
    flex: none;
    height: 24px;
    display: flex;
    align-items: center;
    background: #f5f5f5;
    font-size: 10px;
}
.hscroll {
    flex: 1;
    height: 13px;
    margin-left: 17px;
    display: flex;
}
.hscroll button {
    width: 12px;
    border: 1px solid #bbb;
    background: #fff;
}
.htrack {
    width: 38px;
    background: #e8e8e8;
}
.hthumb {
    flex: 1;
    border: 1px solid #aaa;
    background: #fff;
}
.sheet-bar .dots {
    margin: 0 14px 0 12px;
}
.ellipsis {
    margin: 0 9px 0 12px;
    font-weight: bold;
}
.sheet-tabs {
    align-self: stretch;
    display: flex;
    align-items: center;
}
.sheet-tabs button {
    height: 15px;
    padding: 0 9px;
    border-right: 1px solid #aaa;
}
.sheet-tabs button:first-child {
    border-left: 1px solid #aaa;
}
.sheet-tabs .current {
    height: 22px;
    align-self: flex-start;
    border-bottom: 2px solid #1d6f42;
    background: #fff;
    color: #1d5034;
    font-weight: bold;
}
.tab-nav {
    width: 79px;
    display: flex;
    justify-content: flex-end;
    gap: 20px;
    padding-right: 21px;
}

/* status bar */
.status {
    flex: none;
    height: 18px;
    display: flex;
    align-items: center;
    padding: 0 6px;
    background: #1d6f42;
    color: #fff;
    font-weight: 600;
}
.ready {
    flex: 1;
}
.count {
    margin: 0 12px 0 25px;
}
.views {
    align-self: stretch;
    display: flex;
    margin: 0 6px 0 15px;
}
.views button {
    width: 30px;
}
.views .on {
    background: #165633;
}
.zoom {
    display: flex;
    align-items: center;
    gap: 2px;
    margin-right: 11px;
    font-size: 12px;
}
.zoom input {
    appearance: none;
    width: 81px;
    height: 11px;
    background: linear-gradient(#b9d5c5, #b9d5c5) center / 100% 1px no-repeat;
}
.zoom input::-webkit-slider-thumb {
    appearance: none;
    width: 4px;
    height: 10px;
    background: #fff;
}

/* Format Cells dialog */
.dialog {
    position: absolute;
    left: 122px;
    top: 148px;
    width: 432px;
    height: 423px;
    display: flex;
    flex-direction: column;
    padding: 0 4px 4px;
    border: 2px solid #333;
    border-radius: 6px;
    background: #fafafa;
    box-shadow: 3px 3px 8px rgba(0,0,0,0.55);
    font-weight: 600;
    color: #111;
}
.dialog-head {
    height: 23px;
    display: flex;
    justify-content: space-between;
    align-items: center;
}
.dialog-btns {
    align-self: flex-start;
    display: flex;
    height: 15px;
    border: 1px solid #555;
    border-top: none;
    border-radius: 0 0 4px 4px;
    overflow: hidden;
}
.help {
    width: 21px;
    background: linear-gradient(#eee 50%, #ccc 50%);
    font-size: 11px;
}
.close {
    width: 37px;
    background: linear-gradient(#e49a8c 45%, #c63a26 50%, #d9644e);
}
.dialog-body {
    flex: 1;
    display: flex;
    flex-direction: column;
    padding: 5px 5px 6px 5px;
    border: 1px solid #777;
    background: #f0f0f0;
}
.dialog-tabs {
    display: flex;
    align-items: flex-end;
}
.dialog-tabs button {
    width: 43px;
    height: 16px;
    border: 1px solid #888;
    border-bottom: none;
    background: linear-gradient(#f2f2f2 50%, #ddd 50%);
}
.dialog-tabs button:first-child {
    width: 46px;
}
.dialog-tabs .active {
    width: 46px;
    height: 19px;
    margin-bottom: -1px;
    background: #fff;
}
.dialog-tabs .active span {
    padding: 0 14px;
    border: 1px dotted #333;
}
.page {
    flex: 1;
    display: flex;
    flex-direction: column;
    padding: 7px 5px 6px 6px;
    border: 1px solid #777;
    background: #fff;
}
.page-cols {
    flex: 1;
    display: flex;
    gap: 52px;
    padding-left: 5px;
}
.colors {
    width: 147px;
}
.no-color {
    width: 140px;
    height: 15px;
    margin: 6px 0 8px 4px;
    border: 1px solid #999;
}
.swatches {
    display: grid;
    grid-template-columns: repeat(10, 10px);
    justify-content: space-between;
    row-gap: 4px;
    width: 140px;
    margin-left: 4px;
}
.swatch {
    width: 10px;
    height: 10px;
    border: 1px solid #8a8a8a;
}
.swatch.picked {
    outline: 1px solid #444;
    outline-offset: 1px;
}
.colors hr {
    margin: 6px 0;
    border: none;
    border-top: 1px solid #aaa;
}
.colors hr + .swatches:last-of-type {
    margin-top: 7px;
}
.color-btns {
    display: flex;
    gap: 7px;
    margin-top: 14px;
}
.btn {
    min-width: 59px;
    height: 19px;
    padding: 0 5px;
    border: 1px solid #777;
    border-radius: 2px;
    background: linear-gradient(#f5f5f5 50%, #dcdcdc 50%);
}
.btn.ok {
    border-color: #2c82ad;
    box-shadow: inset 0 0 0 1px #7cc7e8;
}
.pattern label {
    display: block;
}
.drop {
    position: relative;
    width: 139px;
    margin: 3px 0 2px;
}
.drop select {
    appearance: none;
    display: block;
    width: 100%;
    height: 18px;
    padding-right: 14px;
    border: 1px solid #999;
    text-align-last: center;
}
.drop-arrow {
    position: absolute;
    right: 0;
    top: 0;
    width: 14px;
    height: 18px;
    border: 1px solid #555;
    background: linear-gradient(#f5f5f5 50%, #dcdcdc 50%);
    pointer-events: none;
}
.drop-arrow::after {
    content: "";
    position: absolute;
    left: 3px;
    top: 7px;
    border: 3px solid transparent;
    border-top: 4px solid #111;
    border-bottom: 0;
}
.sample {
    margin: 0 0 12px;
    padding: 6px 8px 5px;
    border: 1px solid #ddd;
    min-width: 0;
}
.sample legend {
    padding: 0 2px;
    margin-left: -6px;
}
.sample-fill {
    height: 37px;
    background: #8ed145;
    border: 1px solid #7dbb38;
}
.page-foot {
    display: flex;
    justify-content: flex-end;
}
.dialog-foot {
    display: flex;
    justify-content: flex-end;
    gap: 8px;
    padding-top: 8px;
}
.pointer {
    position: absolute;
    left: 384px;
    top: 343px;
}

/* credit lines over the sheet */
.credit {
    position: absolute;
    left: 24px;
    bottom: 84px;
    width: 214px;
    text-align: center;
    white-space: nowrap;
    font: bold 13px/30px "DejaVu Sans", sans-serif;
    color: #111;
}
.credit strong {
    display: block;
    font: bold 16px/24px "Liberation Sans", sans-serif;
    color: #000;
}
```
